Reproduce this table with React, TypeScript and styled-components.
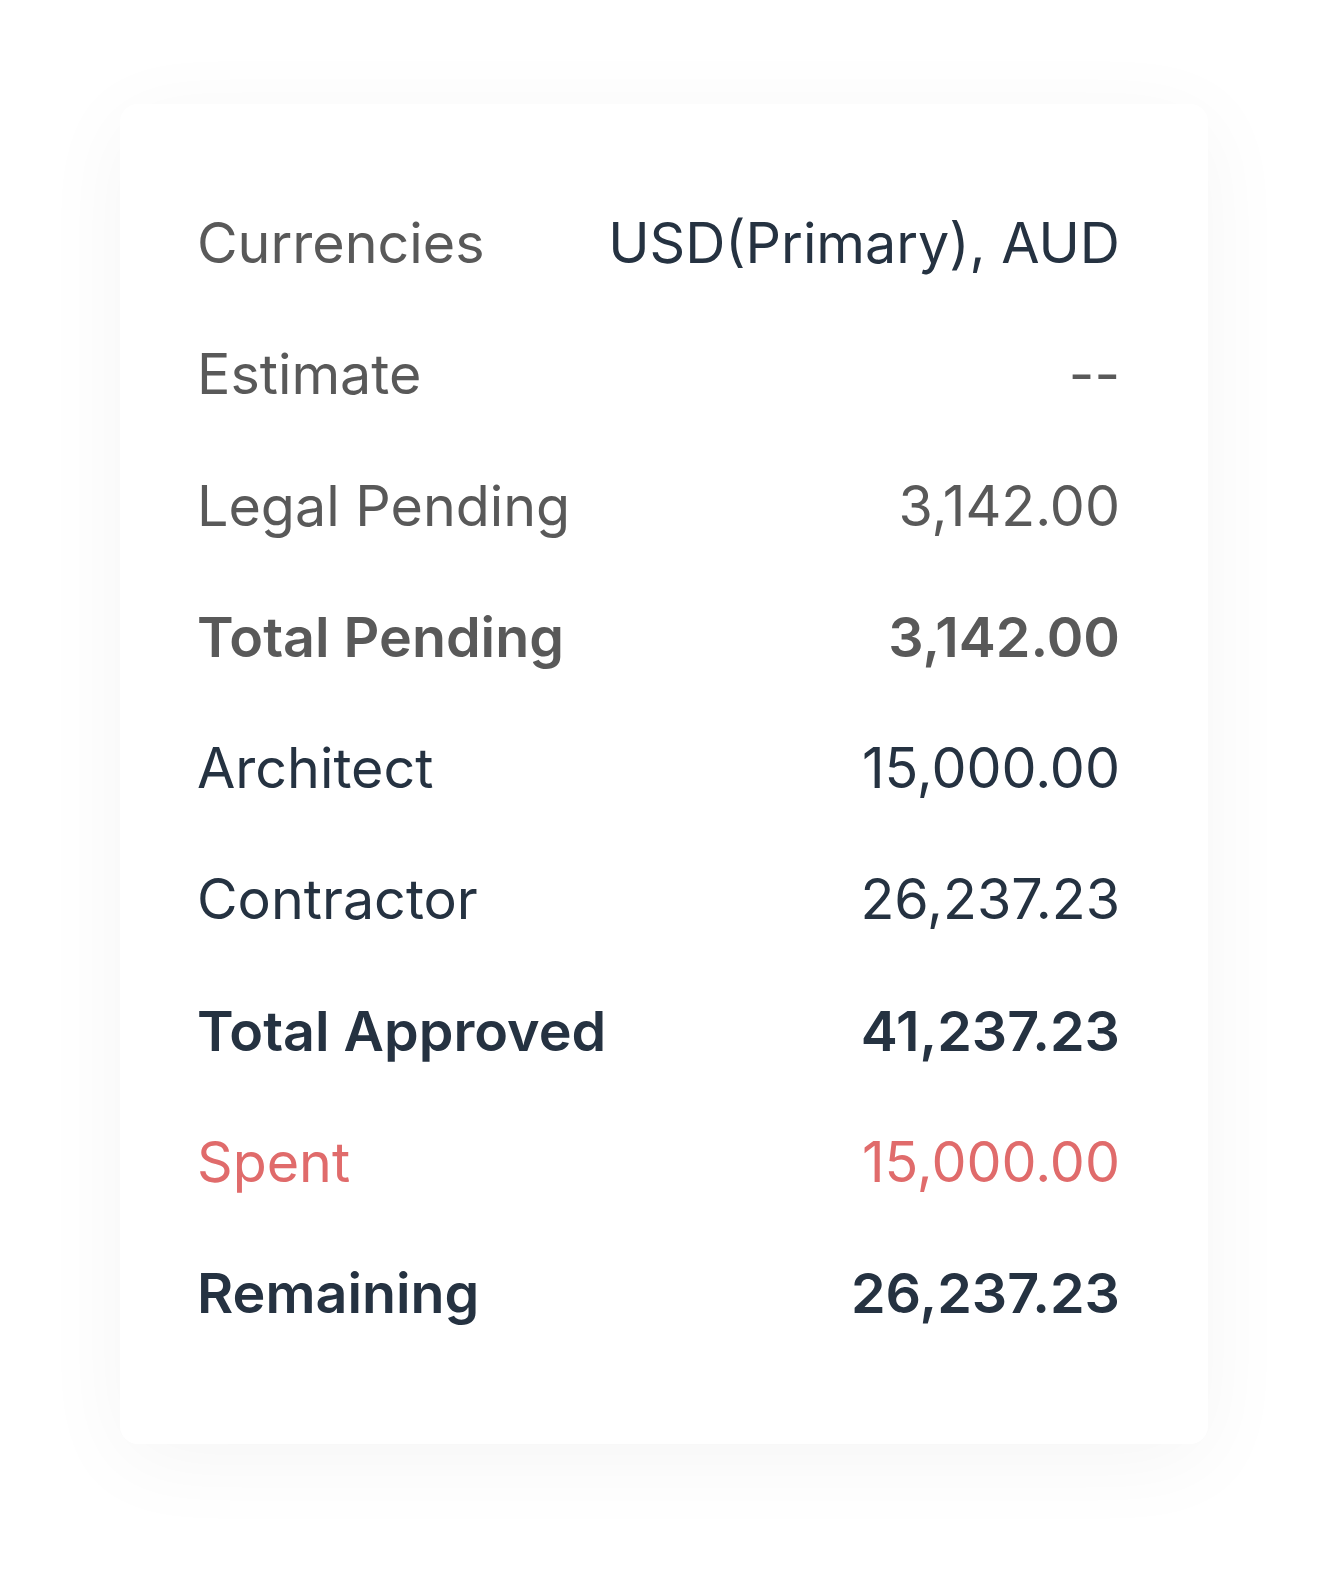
import React from "react";
import styled, { createGlobalStyle } from "styled-components";

type Tone = "muted" | "dark" | "danger";

interface Line {
  label: string;
  value: string;
  tone: Tone;
  strong?: boolean;
}

const lines: Line[] = [
  { label: "Currencies", value: "USD(Primary), AUD", tone: "muted" },
  { label: "Estimate", value: "--", tone: "muted" },
  { label: "Legal Pending", value: "3,142.00", tone: "muted" },
  { label: "Total Pending", value: "3,142.00", tone: "muted", strong: true },
  { label: "Architect", value: "15,000.00", tone: "dark" },
  { label: "Contractor", value: "26,237.23", tone: "dark" },
  { label: "Total Approved", value: "41,237.23", tone: "dark", strong: true },
  { label: "Spent", value: "15,000.00", tone: "danger" },
  { label: "Remaining", value: "26,237.23", tone: "dark", strong: true },
];

const colors: Record<Tone, string> = {
  muted: "#595959",
  dark: "#253241",
  danger: "#e06b6b",
};

function App() {
  return (
    <>
      <GlobalStyle />
      <Page>
        <Card>
          {lines.map((line, i) => (
            <Row key={line.label}>
              <Label tone={line.tone} $strong={line.strong}>
                {line.label}
              </Label>
              <Value
                tone={i === 0 ? "dark" : line.tone}
                $strong={line.strong}
              >
                {line.value}
              </Value>
            </Row>
          ))}
        </Card>
      </Page>
    </>
  );
}

const GlobalStyle = createGlobalStyle`
  body {
    margin: 0;
    background: #ffffff;
    font-family: Inter, "Noto Sans", sans-serif;
  }
`;

const Page = styled.div`
  padding: 104px 120px 137px;
`;

const Card = styled.div`
  width: 1088px;
  box-sizing: border-box;
  padding: 73px 88px 85px 77px;
  background: #ffffff;
  border-radius: 18px;
  box-shadow: 0 16px 90px rgba(0, 0, 0, 0.045);
`;

const Row = styled.div`
  display: flex;
  justify-content: space-between;
  align-items: baseline;
  height: 131.3px;
  line-height: 131.3px;
  font-size: 55.6px;
`;

const Label = styled.span<{ tone: Tone; $strong?: boolean }>`
  color: ${(p) => colors[p.tone]};
  font-weight: ${(p) => (p.$strong ? 600 : 400)};
`;

const Value = styled(Label)`
  text-align: right;
`;

export default App;
